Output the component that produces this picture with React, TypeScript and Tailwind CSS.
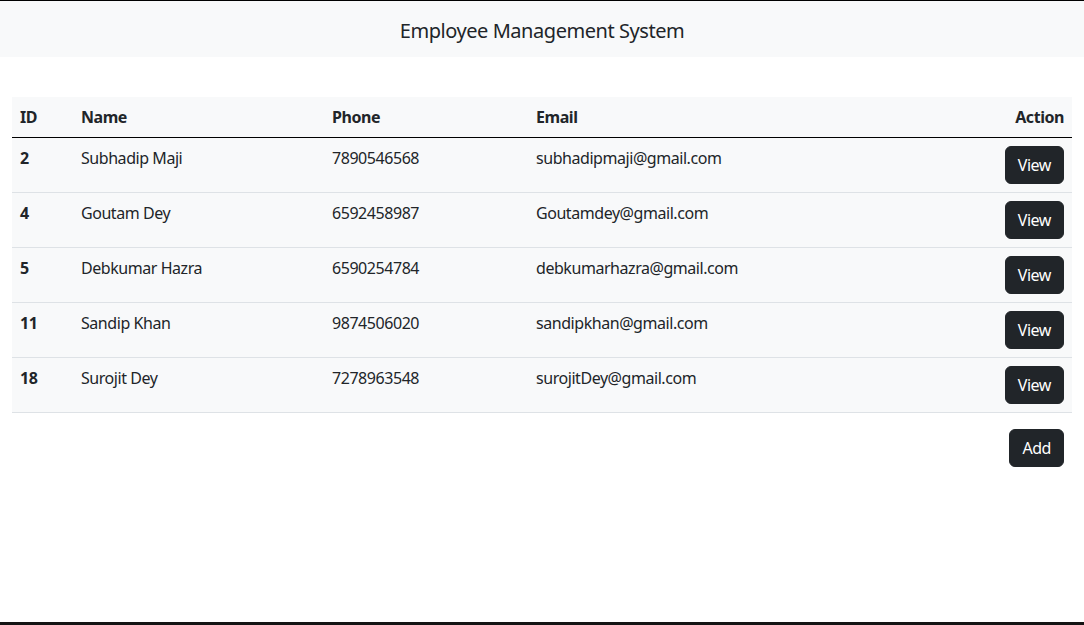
const employees = [
  { id: 2, name: 'Subhadip Maji', phone: '7890546568', email: 'subhadipmaji@gmail.com' },
  { id: 4, name: 'Goutam Dey', phone: '6592458987', email: 'Goutamdey@gmail.com' },
  { id: 5, name: 'Debkumar Hazra', phone: '6590254784', email: 'debkumarhazra@gmail.com' },
  { id: 11, name: 'Sandip Khan', phone: '9874506020', email: 'sandipkhan@gmail.com' },
  { id: 18, name: 'Surojit Dey', phone: '7278963548', email: 'surojitDey@gmail.com' },
];

export default function App() {
  return (
    <div className="h-[625px] flex flex-col bg-white text-[#212529] font-['Noto_Sans','Open_Sans',sans-serif] text-base leading-6 tracking-[-0.028em] border-t border-black">
      <header className="h-[56px] bg-[#f8f9fa] flex items-center justify-center pt-[3px]">
        <h1 className="text-[20px] leading-[30px]">Employee Management System</h1>
      </header>

      <main className="flex-1 px-3 pt-10">
        <table className="w-full table-fixed border-collapse">
          <colgroup>
            <col className="w-[61px]" />
            <col className="w-[251px]" />
            <col className="w-[204px]" />
            <col className="w-[400px]" />
            <col />
          </colgroup>
          <thead>
            <tr className="bg-[#f8f9fa] border-b border-black">
              <th className="p-2 text-left font-bold">ID</th>
              <th className="p-2 text-left font-bold">Name</th>
              <th className="p-2 text-left font-bold">Phone</th>
              <th className="p-2 text-left font-bold">Email</th>
              <th className="p-2 text-right font-bold">Action</th>
            </tr>
          </thead>
          <tbody>
            {employees.map((e) => (
              <tr key={e.id} className="bg-[#f8f9fa] border-b border-[#dee2e6]">
                <th className="p-2 text-left font-bold align-top">{e.id}</th>
                <td className="p-2 align-top">{e.name}</td>
                <td className="p-2 align-top">{e.phone}</td>
                <td className="p-2 align-top">{e.email}</td>
                <td className="p-2 text-right align-top">
                  <button className="bg-[#212529] border border-[#212529] text-white rounded-md px-3 py-1.5 leading-6">
                    View
                  </button>
                </td>
              </tr>
            ))}
          </tbody>
        </table>
        <div className="flex justify-end pr-2 mt-4">
          <button className="bg-[#212529] border border-[#212529] text-white rounded-md px-3 py-1.5 leading-6">
            Add
          </button>
        </div>
      </main>

      <div className="h-[3px] bg-[#141414]" />
    </div>
  );
}
